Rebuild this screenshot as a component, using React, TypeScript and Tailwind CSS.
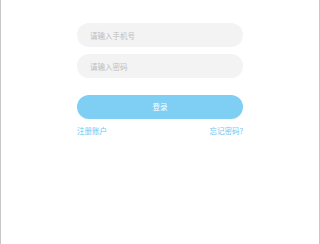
export default function App() {
  return (
    <div
      className="w-[320px] h-[244px] bg-white border-x border-[#c8c8c8] flex flex-col items-center"
      style={{ fontFamily: '"Noto Sans CJK SC", "Noto Sans", sans-serif' }}
    >
      <form onSubmit={(e) => e.preventDefault()} className="w-[166px] mt-[23px] flex flex-col">
        {/* Phone */}
        <input
          type="text"
          placeholder="请输入手机号"
          className="h-[24px] w-full rounded-full bg-[#f3f3f3] pl-[13px] text-[7.5px] text-gray-600 placeholder:text-[#bdbdbd] outline-none"
        />
        {/* Password */}
        <input
          type="password"
          placeholder="请输入密码"
          className="mt-[7px] h-[24px] w-full rounded-full bg-[#f3f3f3] pl-[13px] text-[7.5px] text-gray-600 placeholder:text-[#bdbdbd] outline-none"
        />
        <button
          type="submit"
          className="mt-[17px] h-[24px] w-full rounded-full bg-[#7fcef4] text-[7.5px] text-white"
        >
          登录
        </button>
        <div className="mt-[7px] flex justify-between text-[7.5px] leading-[10px] text-[#6cc6f2]">
          <a href="#">注册账户</a>
          <a href="#">忘记密码?</a>
        </div>
      </form>
    </div>
  );
}
